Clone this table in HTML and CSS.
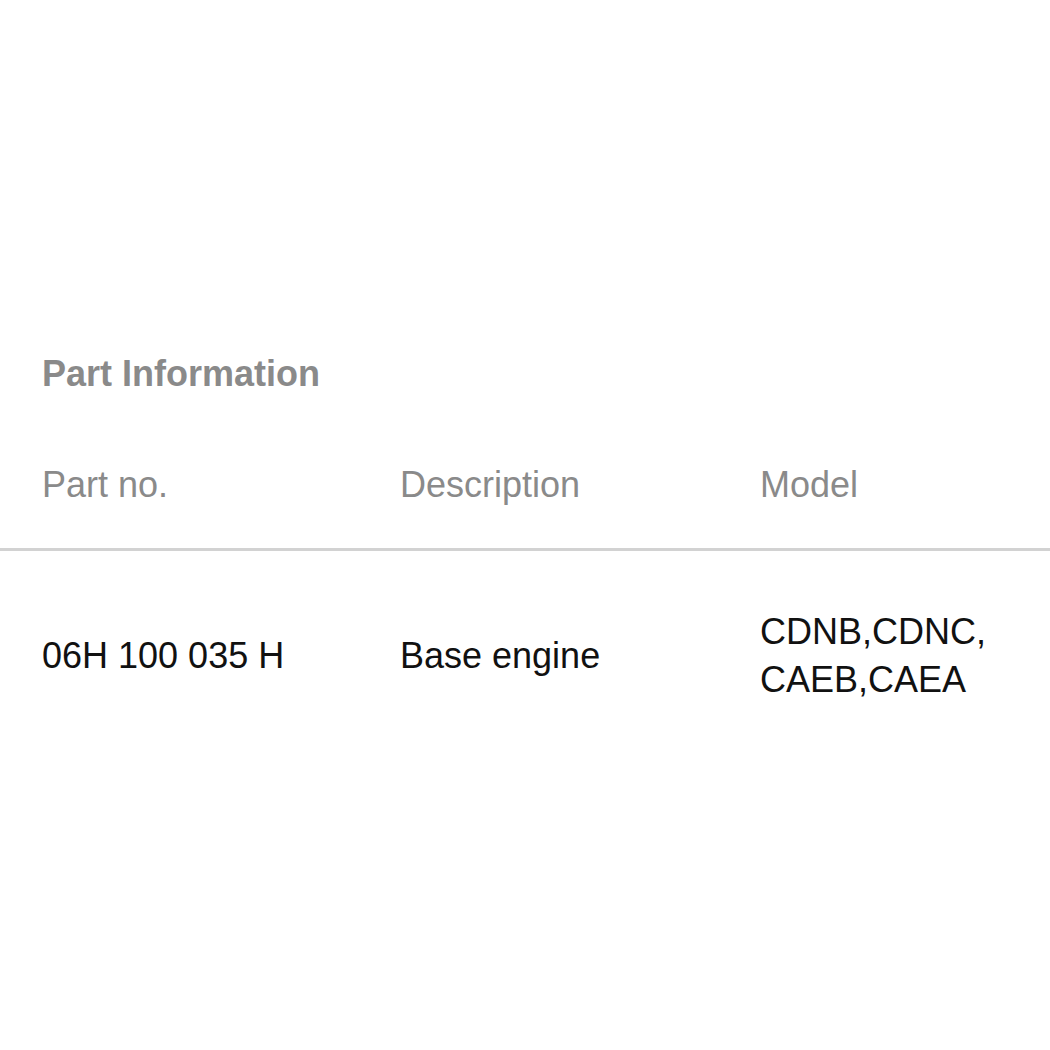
FILE: index.html
```html
<!DOCTYPE html>
<html lang="en">
<head>
  <meta charset="UTF-8" />
  <meta name="viewport" content="width=device-width, initial-scale=1" />
  <title>Part Information</title>
  <link rel="stylesheet" href="styles.css">
</head>
<body>

  <div class="part-info">
    <h2 class="title">Part Information</h2>

    <div class="parts-table">
      <div class="row head">
        <div class="cell">Part no.</div>
        <div class="cell">Description</div>
        <div class="cell">Model</div>
      </div>
      <div class="row">
        <div class="cell">06H 100 035 H</div>
        <div class="cell">Base engine</div>
        <div class="cell">CDNB,CDNC,<br>CAEB,CAEA</div>
      </div>
    </div>
  </div>

</body>
</html>
```

FILE: styles.css
```css
body {
  margin: 0;
  padding: 0;
  font-family: 'Liberation Sans', Arial, sans-serif;
  background: #fff;
  color: #111;
}

.part-info {
  padding-top: 353px;
}

.title {
  margin: 0;
  padding-left: 42px;
  font-size: 36px;
  line-height: 41px;
  font-weight: bold;
  color: #8a8a8a;
}

.parts-table {
  margin-top: 70px;
}

.row {
  display: grid;
  grid-template-columns: 358px 360px 1fr;
  align-items: center;
  padding-left: 42px;
  font-size: 36px;
  line-height: 48px;
  padding-top: 57px;
  padding-bottom: 57px;
}

/* cabeçalho da tabela */
.row.head {
  color: #8a8a8a;
  line-height: 41px;
  padding-top: 0;
  padding-bottom: 43px;
  border-bottom: 3px solid #d2d2d2;
}
```
